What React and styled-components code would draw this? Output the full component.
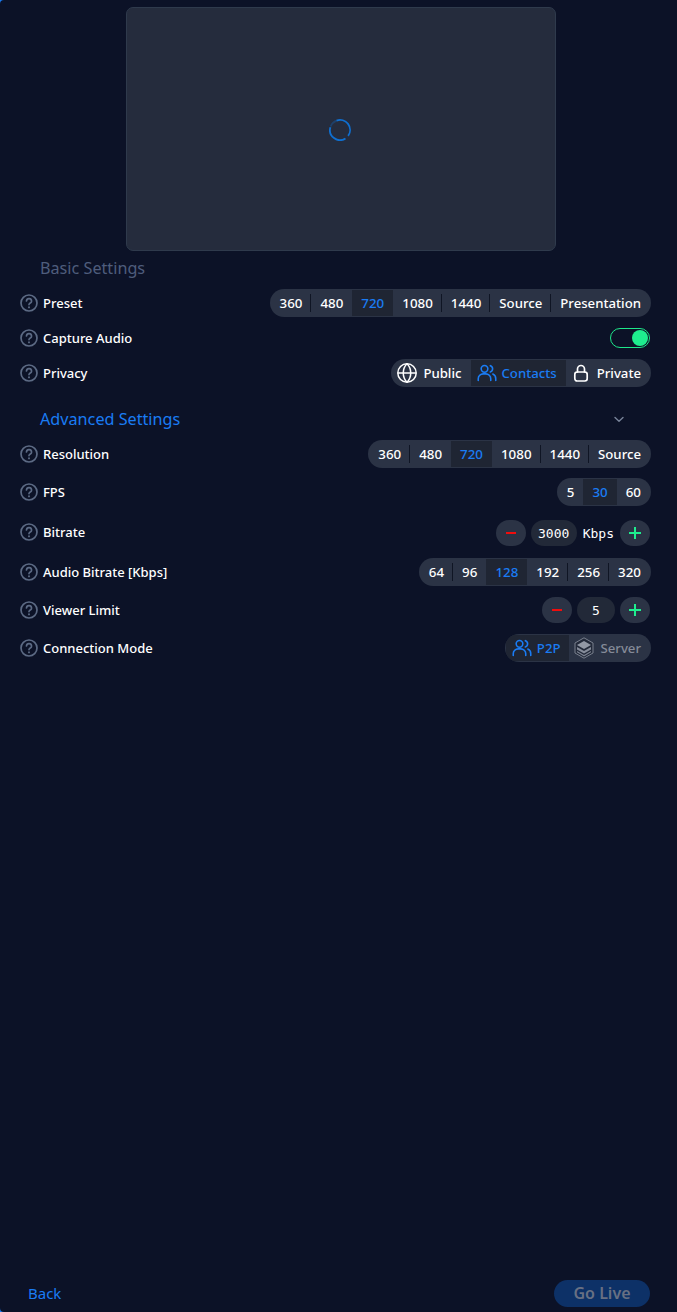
import React from 'react';
import styled, { createGlobalStyle } from 'styled-components';

const Global = createGlobalStyle`
  html, body { margin: 0; padding: 0; background: #1a7cf4; }
  * { box-sizing: border-box; }
`;

const Page = styled.div`
  width: 677px; height: 1312px; background: #0c1227; display: flex; flex-direction: column;
  font-family: "Noto Sans", "Open Sans", sans-serif; color: #fff; overflow: hidden; border-radius: 4px 0 0 4px;
`;
const Content = styled.div`
  flex: 1; padding: 7px 26px 0 20px; display: flex; flex-direction: column;
`;
const PreviewWrap = styled.div`
  display: flex; justify-content: center; padding-left: 10px;
`;
const Preview = styled.div`
  width: 430px; height: 244px; background: #252c3d; border: 1px solid #2f3a4c; border-radius: 7px;
  display: flex; align-items: center; justify-content: center; color: #0f6fd0; padding: 2px 2px 0 0;
`;
const Heading = styled.div`
  font-size: 16.2px; font-weight: 400; color: ${p => p.$color}; padding-left: 20px; line-height: 24px;
`;
const BasicHead = styled(Heading)`
  margin: 5px 0 5px;
`;
const AdvHead = styled.div`
  display: flex; align-items: center; justify-content: space-between; padding-right: 26px; margin-top: 17px; margin-bottom: 4px;
`;
const Row = styled.div`
  height: ${p => p.$h}px; display: flex; align-items: center; justify-content: space-between;
`;
const Label = styled.div`
  display: flex; align-items: center; gap: 5px; font-size: 13px; font-weight: 500; color: #fff;
`;
const Pill = styled.div`
  display: flex; align-items: center; height: 28px; background: #2b3345; border-radius: 14px; padding: 1px; overflow: hidden;
`;
const Seg = styled.div`
  height: 26px; display: flex; align-items: center; justify-content: center; gap: ${p => p.$gap || 0}px;
  padding: 0 ${p => p.$r ?? p.$l ?? 9}px 0 ${p => p.$l ?? 9}px; font-size: ${p => p.$num ? 13.35 : 13.2}px; font-weight: 500; position: relative; white-space: nowrap;
  color: ${p => p.$active ? '#1a7cf4' : p.$dim ? '#858b98' : '#fff'};
  background: ${p => p.$active ? '#1f2533' : 'transparent'};
  ${p => p.$sep ? `&::after { content: ""; position: absolute; right: 0; top: 4px; bottom: 4px; width: 1px; background: #0f1524; }` : ''}
`;
const Switch = styled.div`
  width: 40px; height: 20px; border: 1px solid #1ee78a; border-radius: 10px; display: flex; align-items: center; justify-content: flex-end; padding-right: 1px; margin-right: 1px;
`;
const Knob = styled.div`
  width: 16px; height: 16px; border-radius: 50%; background: #1eed8e;
`;
const Stepper = styled.div`
  display: flex; align-items: center; gap: 5px; padding-right: 1px; margin-top: ${p => p.$shift || 0}px;
`;
const RoundBtn = styled.div`
  width: 30px; height: 26px; border-radius: 13px; background: #2b3345; display: flex; align-items: center; justify-content: center;
`;
const Value = styled.div`
  width: ${p => p.$w}px; height: 26px; border-radius: 13px; background: #222938; display: flex; align-items: center; justify-content: center;
  font-family: "DejaVu Sans Mono", "Liberation Mono", monospace; font-size: 13px; color: #fff;
`;
const Unit = styled.div`
  font-family: "DejaVu Sans Mono", "Liberation Mono", monospace; font-size: 13px; color: #fff; padding: 0 1px;
`;
const Footer = styled.div`
  height: 27px; padding: 0 27px 0 28px; display: flex; justify-content: space-between; align-items: center;
  margin-bottom: 5px;
`;
const BackBtn = styled.div`
  font-size: 15px; color: #1a7cf4; line-height: 27px;
`;
const LiveBtn = styled.div`
  width: 96px; height: 27px; border-radius: 13.5px; background: #0d3167; color: #687083; font-size: 16px; font-weight: 600;
  display: flex; align-items: center; justify-content: center; padding-bottom: 2px;
`;

const Help = () => (
  <svg width="18" height="18" viewBox="0 0 18 18" fill="none" stroke="#5c6a84" strokeWidth="1.7" strokeLinecap="round">
    <circle cx="9" cy="9" r="8" />
    <path d="M6.5 7a2.5 2.5 0 0 1 5 .4c0 1.500-2.500 1.700-2.500 3.200" />
    <path d="M9 13.300v.1" strokeWidth="1.9" />
  </svg>
);
const Spinner = () => (
  <svg width="22" height="22" viewBox="0 0 22 22" fill="none" stroke="currentColor" strokeWidth="1.8">
    <path d="M7.500 1.600a10 10 0 0 1 11.600 15.300" />
    <path d="M16.500 19.400A10 10 0 0 1 1.400 8.200" />
    <path d="M1.700 7.500A10 10 0 0 1 7.500 1.600" opacity=".3" />
  </svg>
);
const Chevron = () => (
  <svg width="12" height="12" viewBox="0 0 12 12" fill="none" stroke="#79849a" strokeWidth="1.4" strokeLinecap="round" strokeLinejoin="round">
    <path d="M2 4.500 6 8.200l4-3.700" />
  </svg>
);
const Globe = () => (
  <svg width="20" height="20" viewBox="0 0 20 20" fill="none" stroke="currentColor" strokeWidth="1.5">
    <circle cx="10" cy="10" r="9.200" /><path d="M.8 10h18.400M10 .8c5 5 5 13.400 0 18.400M10 .8c-5 5-5 13.400 0 18.400" />
  </svg>
);
const Users = () => (
  <svg width="20" height="20" viewBox="0 0 24 24" fill="none" stroke="currentColor" strokeWidth="1.9" strokeLinecap="round" strokeLinejoin="round">
    <circle cx="9" cy="7" r="4" /><path d="M1.500 21v-2a6 6 0 0 1 6-6h3a6 6 0 0 1 6 6v2" /><path d="M16 3.200a4 4 0 0 1 0 7.600M19 13.300a6 6 0 0 1 3.500 5.700v2" />
  </svg>
);
const Lock = () => (
  <svg width="16" height="18" viewBox="0 0 16 18" fill="none" stroke="currentColor" strokeWidth="1.7" strokeLinecap="round">
    <rect x="1.800" y="8" width="12.400" height="9" rx="2.400" /><path d="M4.500 8V5a3.500 3.500 0 0 1 7 0v3" />
  </svg>
);
const Stack = () => (
  <svg width="20" height="22" viewBox="0 0 20 22">
    <path d="M10 .8 19 6v10l-9 5.200L1 16V6z" fill="#232a3a" stroke="#7a808e" strokeWidth="1" />
    <path d="M10 4 17 8 10 12 3 8z" fill="#9298a5" />
    <path d="M3 10 10 14l7-4v2.500L10 16.500 3 12.500z" fill="#858b99" />
    <path d="M3 14 10 18l7-4v1.200L10 19.400 3 15.200z" fill="#7b8190" />
  </svg>
);
const Minus = () => <svg width="10" height="2" viewBox="0 0 10 2"><rect width="10" height="2" fill="#f00d0d" /></svg>;
const Plus = () => <svg width="12" height="12" viewBox="0 0 12 12"><path d="M5 0h2v5h5v2H7v5H5V7H0V5h5z" fill="#1eed8e" /></svg>;

const Segments = ({ items, active }) => (
  <Pill>
    {items.map((t, i) => (
      <Seg key={t} $num={/^\d/.test(t)} $active={i === active} $sep={i < items.length - 1 && i !== active && i !== active - 1}>{t}</Seg>
    ))}
  </Pill>
);
const Setting = ({ label, h, children }) => (
  <Row $h={h}>
    <Label><Help />{label}</Label>
    {children}
  </Row>
);

export default function App() {
  return (
    <Page>
      <Global />
      <Content>
        <PreviewWrap><Preview><Spinner /></Preview></PreviewWrap>
        <BasicHead $color="#4f5d7c">Basic Settings</BasicHead>
        <Setting label="Preset" h={35}>
          <Segments items={['360','480','720','1080','1440','Source','Presentation']} active={2} />
        </Setting>
        <Setting label="Capture Audio" h={35}>
          <Switch><Knob /></Switch>
        </Setting>
        <Setting label="Privacy" h={35}>
          <Pill>
            <Seg $l={5} $r={10} $gap={6}><Globe />Public</Seg>
            <Seg $l={6} $r={9} $gap={4} $active><Users />Contacts</Seg>
            <Seg $l={7} $r={9} $gap={8}><Lock />Private</Seg>
          </Pill>
        </Setting>
        <AdvHead>
          <Heading $color="#1a7cf4">Advanced Settings</Heading>
          <Chevron />
        </AdvHead>
        <Setting label="Resolution" h={38}>
          <Segments items={['360','480','720','1080','1440','Source']} active={2} />
        </Setting>
        <Setting label="FPS" h={38}>
          <Segments items={['5','30','60']} active={1} />
        </Setting>
        <Setting label="Bitrate" h={41}>
          <Stepper $shift={3}>
            <RoundBtn><Minus /></RoundBtn>
            <Value $w={46}>3000</Value>
            <Unit>Kbps</Unit>
            <RoundBtn><Plus /></RoundBtn>
          </Stepper>
        </Setting>
        <Setting label="Audio Bitrate [Kbps]" h={39}>
          <Segments items={['64','96','128','192','256','320']} active={2} />
        </Setting>
        <Setting label="Viewer Limit" h={38}>
          <Stepper>
            <RoundBtn><Minus /></RoundBtn>
            <Value $w={38}>5</Value>
            <RoundBtn><Plus /></RoundBtn>
          </Stepper>
        </Setting>
        <Setting label="Connection Mode" h={38}>
          <Pill>
            <Seg $l={6} $r={8} $gap={5} $active><Users />P2P</Seg>
            <Seg $l={5} $r={9} $gap={7} $dim><Stack />Server</Seg>
          </Pill>
        </Setting>
      </Content>
      <Footer>
        <BackBtn>Back</BackBtn>
        <LiveBtn>Go Live</LiveBtn>
      </Footer>
    </Page>
  );
}
